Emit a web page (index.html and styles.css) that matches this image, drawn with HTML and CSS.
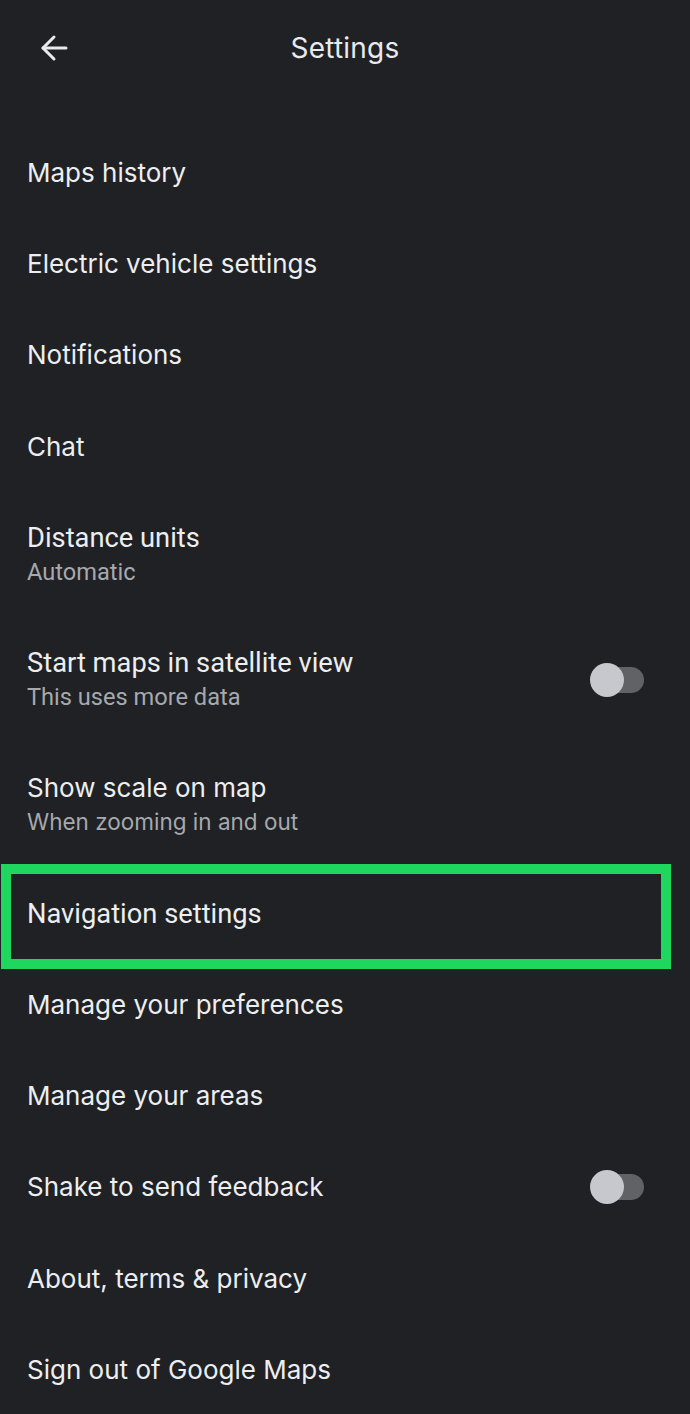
FILE: index.html
```html
<!DOCTYPE html>
<html lang="en">
<head>
<meta charset="utf-8">
<title>Settings</title>
<link rel="stylesheet" href="styles.css">
</head>
<body>
<div class="screen">
  <header class="topbar">
    <div class="back" aria-label="Back">
      <svg width="28" height="28" viewBox="0 0 28 28" fill="none" stroke="#e8eaed" stroke-width="3" stroke-linecap="round" stroke-linejoin="round">
        <path d="M26 14H3"/>
        <path d="M14 3L3 14l11 11"/>
      </svg>
    </div>
    <h1 class="title">Settings</h1>
    <div class="spacer"></div>
  </header>
  <ul class="list">
    <li class="row"><div class="text"><span class="label">Maps history</span></div></li>
    <li class="row"><div class="text"><span class="label">Electric vehicle settings</span></div></li>
    <li class="row"><div class="text"><span class="label">Notifications</span></div></li>
    <li class="row"><div class="text"><span class="label">Chat</span></div></li>
    <li class="row two roboto"><div class="text"><span class="label">Distance units</span><span class="sub">Automatic</span></div></li>
    <li class="row two roboto"><div class="text"><span class="label">Start maps in satellite view</span><span class="sub">This uses more data</span></div><div class="toggle"><span class="track"></span><span class="thumb"></span></div></li>
    <li class="row two"><div class="text"><span class="label">Show scale on map</span><span class="sub">When zooming in and out</span></div></li>
    <li class="row roboto highlight"><div class="text"><span class="label">Navigation settings</span></div></li>
    <li class="row"><div class="text"><span class="label">Manage your preferences</span></div></li>
    <li class="row"><div class="text"><span class="label">Manage your areas</span></div></li>
    <li class="row"><div class="text"><span class="label">Shake to send feedback</span></div><div class="toggle"><span class="track"></span><span class="thumb"></span></div></li>
    <li class="row"><div class="text"><span class="label">About, terms &amp; privacy</span></div></li>
    <li class="row"><div class="text"><span class="label">Sign out of Google Maps</span></div></li>
  </ul>
</div>
</body>
</html>
```
FILE: styles.css
```css
* { box-sizing: border-box; }
html, body {
  margin: 0;
  padding: 0;
  background: #202124;
}
body {
  width: 690px;
  height: 1414px;
  overflow: hidden;
  font-family: Inter, "Noto Sans", sans-serif;
  color: #e8eaed;
}
.screen {
  display: flex;
  flex-direction: column;
}
.topbar {
  height: 96px;
  display: grid;
  grid-template-columns: 100px 1fr 100px;
  align-items: center;
}
.back {
  display: flex;
  justify-content: center;
  padding-left: 8px;
}
.back svg { display: block; }
.title {
  margin: 0;
  text-align: center;
  font-size: 28px;
  font-weight: 400;
  letter-spacing: 0.2px;
}
.list {
  list-style: none;
  margin: 0;
  padding: 31.4px 0 0 0;
}
.row {
  position: relative;
  display: flex;
  align-items: center;
  padding: 28.6px 46px 28.65px 27px;
}
.text {
  flex: 1;
  display: flex;
  flex-direction: column;
}
.label {
  font-size: 26px;
  line-height: 34px;
  color: #eceef0;
}
.sub {
  font-size: 22.5px;
  line-height: 34px;
  color: #a6a9ae;
}
.roboto .label, .roboto .sub {
  font-family: Roboto, "Liberation Sans", sans-serif;
}
.roboto .label { font-size: 27.3px; }
.roboto .sub { font-size: 23.6px; }
.toggle {
  position: relative;
  width: 54px;
  height: 34px;
  flex: none;
}
.track {
  position: absolute;
  right: 0;
  top: 4px;
  width: 50px;
  height: 26px;
  border-radius: 13px;
  background: #606266;
}
.thumb {
  position: absolute;
  left: 0;
  top: 0;
  width: 34px;
  height: 34px;
  border-radius: 50%;
  background: #c6c8cd;
}
.highlight::after {
  content: "";
  position: absolute;
  left: 1px;
  right: 19px;
  top: -4px;
  bottom: -10px;
  border: 10px solid #1fd65f;
  pointer-events: none;
}
```
